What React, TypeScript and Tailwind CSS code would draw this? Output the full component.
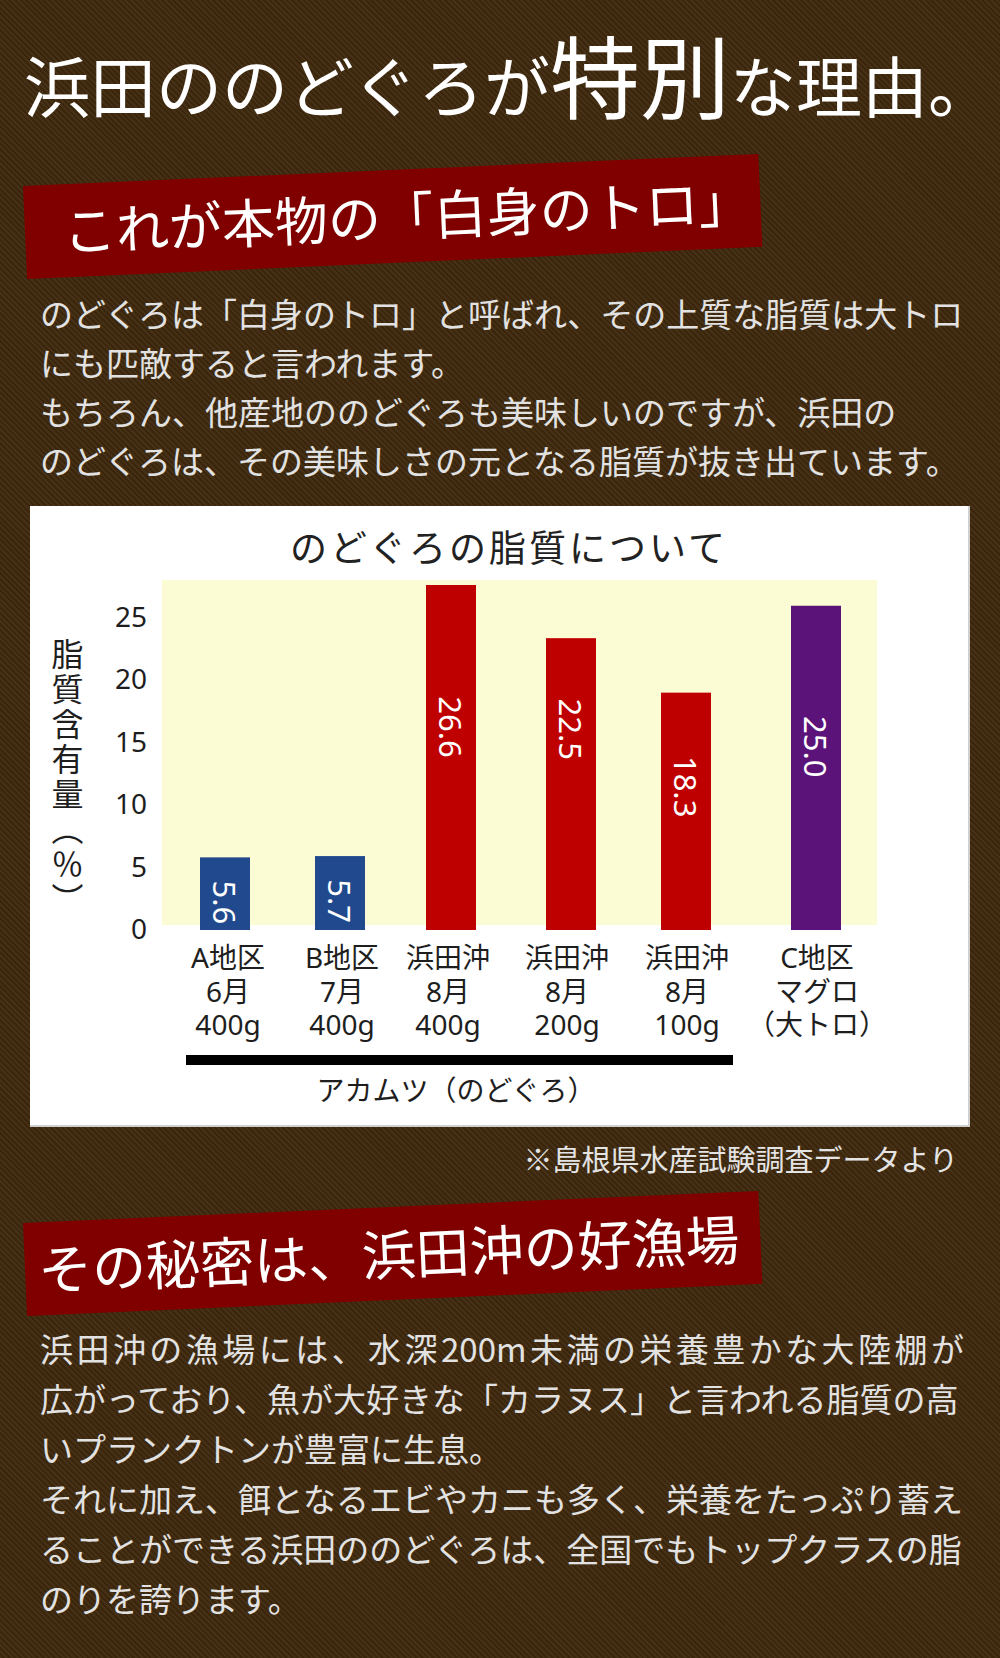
import React from 'react';
import { clsx } from 'clsx';

const bars = [
  { label: ['A地区', '6月', '400g'], v: 5.6, x: 170, lx: 198, off: 45, color: '#214a8e' },
  { label: ['B地区', '7月', '400g'], v: 5.7, x: 285, lx: 312, off: 45, color: '#214a8e' },
  { label: ['浜田沖', '8月', '400g'], v: 26.6, x: 396, lx: 418, off: 142, color: '#bf0000' },
  { label: ['浜田沖', '8月', '200g'], v: 22.5, x: 516, lx: 537, off: 91, color: '#bf0000' },
  { label: ['浜田沖', '8月', '100g'], v: 18.3, x: 631, lx: 657, off: 94, color: '#bf0000' },
  { label: ['C地区', 'マグロ', '（大トロ）'], v: 25.0, x: 761, lx: 787, off: 141, color: '#5b137a' },
];

const ticks = [25, 20, 15, 10, 5, 0];

const para1 = [
  'のどぐろは「白身のトロ」と呼ばれ、その上質な脂質は大トロ',
  'にも匹敵すると言われます。',
  'もちろん、他産地ののどぐろも美味しいのですが、浜田の',
  'のどぐろは、その美味しさの元となる脂質が抜き出ています。',
];

const para2 = [
  '浜田沖の漁場には、水深200m未満の栄養豊かな大陸棚が',
  '広がっており、魚が大好きな「カラヌス」と言われる脂質の高',
  'いプランクトンが豊富に生息。',
  'それに加え、餌となるエビやカニも多く、栄養をたっぷり蓄え',
  'ることができる浜田ののどぐろは、全国でもトップクラスの脂',
  'のりを誇ります。',
];

function Banner({ children, className }: { children: React.ReactNode; className?: string }) {
  return (
    <div
      className={clsx(
        'ml-[23px] w-[736px] h-[93px] bg-[#800000] origin-top-left rotate-[-2.5deg] flex items-center pb-[4px] text-white leading-none whitespace-nowrap',
        className
      )}
    >
      {children}
    </div>
  );
}

function Paragraph({ lines, justifyFirst, className }: { lines: string[]; justifyFirst?: boolean; className?: string }) {
  return (
    <div className={clsx('pl-[40px] w-[964px] text-[33px] text-[#e2e2e2]', className)}>
      {lines.map((l, i) => (
        <span
          key={i}
          className={clsx('block', justifyFirst && i === 0 ? 'text-justify [text-align-last:justify]' : 'whitespace-nowrap')}
        >
          {l}
        </span>
      ))}
    </div>
  );
}

// bar heights in px per % of fat
const SCALE = 12.97;
const BASE = 354;

function FatChart() {
  return (
    <div className="mt-[21px] ml-[30px] w-[940px] h-[621px] bg-white border-r-2 border-b-2 border-[#cfcfcf] font-['Noto_Sans','Noto_Sans_CJK_JP',sans-serif] text-[#222]">
      <div className="pt-[22px] pl-[20px] text-center text-[37px] leading-[37px] tracking-[3px] font-['Noto_Sans_CJK_JP',sans-serif]">
        のどぐろの脂質について
      </div>
      <svg width="940" height="551" viewBox="0 0 940 551" className="mt-[11px] block">
        <rect x="132" y="4" width="715" height="345" fill="#fcfcd4" />
        {bars.map((b, i) => {
          const h = b.v * SCALE;
          const top = BASE - h;
          return (
            <g key={i}>
              <rect x={b.x} y={top} width="50" height={h} fill={b.color} />
              <text
                transform={`translate(${b.x + 25} ${top + b.off}) rotate(90)`}
                textAnchor="middle"
                dominantBaseline="central"
                fill="#ffffff"
                fontSize="31"
              >
                {b.v.toFixed(1)}
              </text>
              {b.label.map((t, j) => (
                <text key={j} x={b.lx} y={392 + j * 33.5} textAnchor="middle" fontSize="28" fill="#1e1e1e">
                  {t}
                </text>
              ))}
            </g>
          );
        })}
        {ticks.map((t) => (
          <text key={t} x="117" y={352 - t * 12.5} textAnchor="end" dominantBaseline="central" fontSize="28" fill="#1e1e1e">
            {t}
          </text>
        ))}
        <text
          x="36"
          y="62"
          fontSize="32"
          fill="#1e1e1e"
          style={{ writingMode: 'vertical-rl', letterSpacing: '3px' }}
        >
          脂質含有量（％）
        </text>
        <rect x="156" y="479" width="547" height="10" fill="#000000" />
        <text x="426" y="525" textAnchor="middle" fontSize="28" fill="#1e1e1e">
          アカムツ（のどぐろ）
        </text>
      </svg>
    </div>
  );
}

export default function App() {
  return (
    <div className="w-[1000px] min-h-[1658px] pb-[35px] overflow-hidden bg-[#3b260b] bg-[image:repeating-linear-gradient(45deg,rgba(255,255,255,0.05)_0px,rgba(255,255,255,0.05)_2px,transparent_2px,transparent_4px)] font-['Noto_Sans_CJK_JP','Noto_Sans',sans-serif]">
      <h1 className="pt-[28px] pl-[24px] text-[66px] leading-none font-normal text-white whitespace-nowrap">
        浜田ののどぐろが<span className="text-[90px] leading-none">特別</span>な理由。
      </h1>

      <Banner className="mt-[68px] pl-[38px] text-[53px]">これが本物の「白身のトロ」</Banner>

      <Paragraph lines={para1} className="mt-[10px] leading-[49px]" />

      <FatChart />

      <p className="mt-[11px] pr-[42px] text-right text-[29px] leading-[40px] text-[#e4e4e4]">
        ※島根県水産試験調査データより
      </p>

      <Banner className="mt-[45px] pl-[13px] text-[54px]">その秘密は、浜田沖の好漁場</Banner>

      <Paragraph lines={para2} justifyFirst className="mt-[7px] leading-[50px]" />
    </div>
  );
}
